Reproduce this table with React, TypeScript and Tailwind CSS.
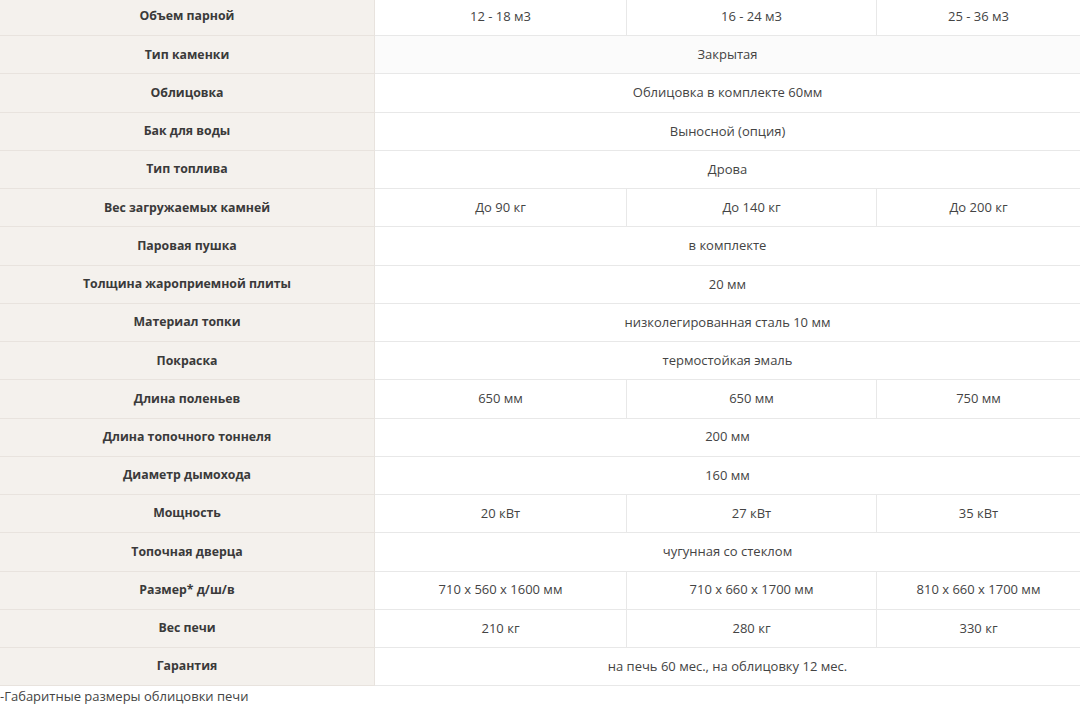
import React from "react";

type Row = { label: string; values: string[] };

const rows: Row[] = [
  { label: "Объем парной", values: ["12 - 18 м3", "16 - 24 м3", "25 - 36 м3"] },
  { label: "Тип каменки", values: ["Закрытая"] },
  { label: "Облицовка", values: ["Облицовка в комплекте 60мм"] },
  { label: "Бак для воды", values: ["Выносной (опция)"] },
  { label: "Тип топлива", values: ["Дрова"] },
  { label: "Вес загружаемых камней", values: ["До 90 кг", "До 140 кг", "До 200 кг"] },
  { label: "Паровая пушка", values: ["в комплекте"] },
  { label: "Толщина жароприемной плиты", values: ["20 мм"] },
  { label: "Материал топки", values: ["низколегированная сталь 10 мм"] },
  { label: "Покраска", values: ["термостойкая эмаль"] },
  { label: "Длина поленьев", values: ["650 мм", "650 мм", "750 мм"] },
  { label: "Длина топочного тоннеля", values: ["200 мм"] },
  { label: "Диаметр дымохода", values: ["160 мм"] },
  { label: "Мощность", values: ["20 кВт", "27 кВт", "35 кВт"] },
  { label: "Топочная дверца", values: ["чугунная со стеклом"] },
  { label: "Размер* д/ш/в", values: ["710 х 560 х 1600 мм", "710 х 660 х 1700 мм", "810 х 660 х 1700 мм"] },
  { label: "Вес печи", values: ["210 кг", "280 кг", "330 кг"] },
  { label: "Гарантия", values: ["на печь 60 мес., на облицовку 12 мес."] },
];

export default function App() {
  return (
    <div className="w-[1080px] h-[708px] overflow-hidden bg-white font-['Open_Sans',sans-serif] text-[13px]">
      <div className="-mt-[2px]">
        {rows.map((row, i) => (
          <div key={row.label} className="flex h-[38.24px]">
            <div className="w-[375px] shrink-0 flex items-center justify-center bg-[#f4f1ed] border-b border-r border-[#e8e3de] font-bold text-[12.3px] text-[#3a3a3a]">
              {row.label}
            </div>
            {row.values.length === 1 ? (
              <div
                className={`flex-1 flex items-center justify-center border-b border-[#e8e8e8] text-[#444] ${
                  i === 1 ? "bg-[#fbfbfb]" : ""
                }`}
              >
                {row.values[0]}
              </div>
            ) : (
              <div className="flex-1 flex border-b border-[#e8e8e8] text-[#444]">
                <div className="w-[252px] flex items-center justify-center border-r border-[#e8e8e8]">
                  {row.values[0]}
                </div>
                <div className="w-[250px] flex items-center justify-center border-r border-[#e8e8e8]">
                  {row.values[1]}
                </div>
                <div className="flex-1 flex items-center justify-center">{row.values[2]}</div>
              </div>
            )}
          </div>
        ))}
      </div>
      <div className="pt-[1px] text-[#444] leading-[18px]">-Габаритные размеры облицовки печи</div>
    </div>
  );
}
